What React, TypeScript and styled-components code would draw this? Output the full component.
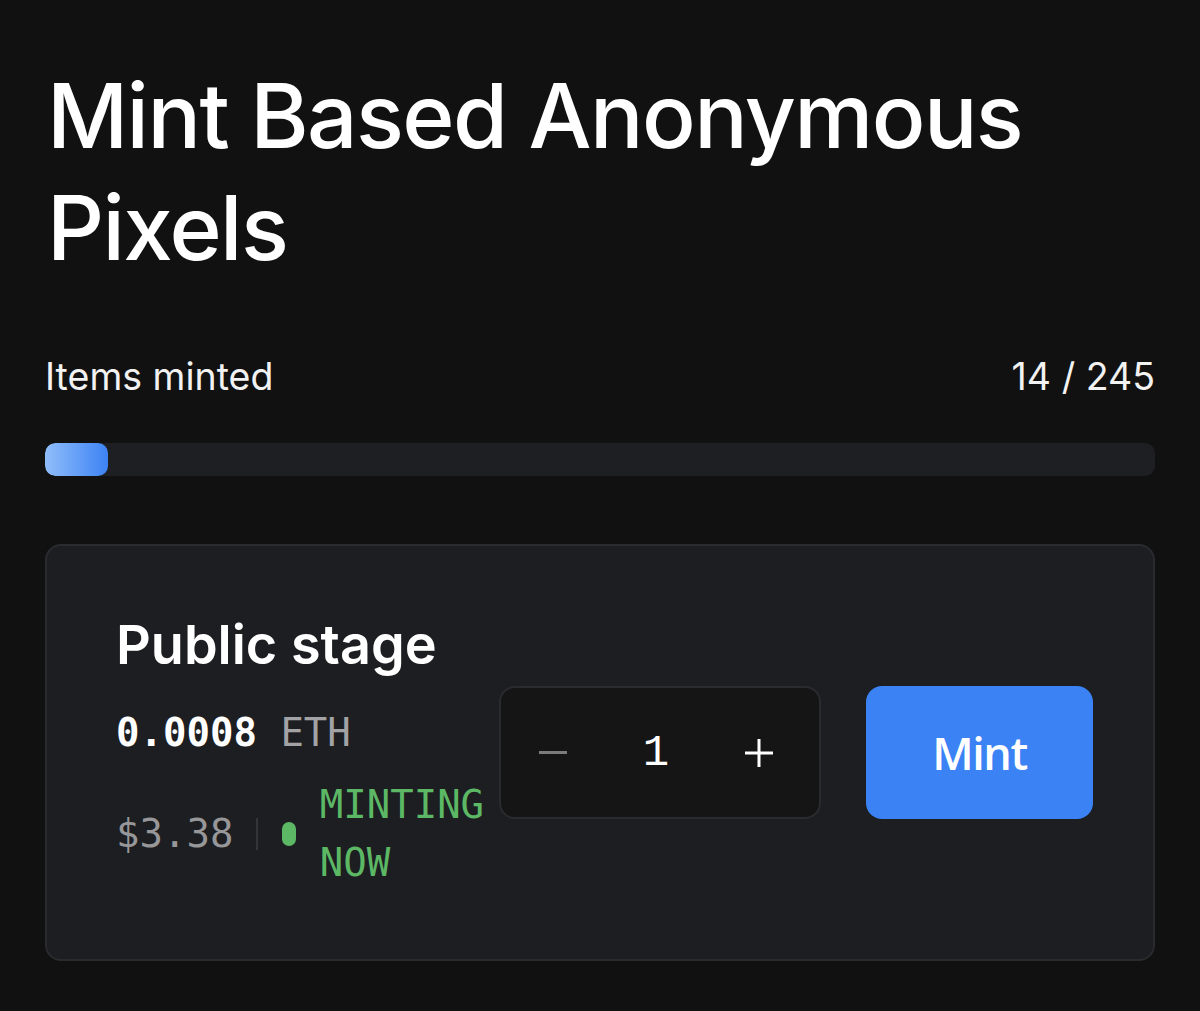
import React from "react";
import styled, { createGlobalStyle } from "styled-components";

const Global = createGlobalStyle`
  html, body { margin: 0; padding: 0; background: #111112; }
  body { font-family: Inter, "Noto Sans", sans-serif; color: #fff; }
`;

const Page = styled.main`
  width: 1200px;
  height: 1011px;
  box-sizing: border-box;
  padding: 60px 45px 0 45px;
  background: #111112;
  display: flex;
  flex-direction: column;
`;

const Title = styled.h1`
  margin: 0 0 0 2px;
  font-family: Inter, sans-serif;
  font-weight: 500;
  font-size: 89px;
  line-height: 112px;
  letter-spacing: -1.6px;
  color: #ffffff;
  max-width: 1010px;
`;

const CountRow = styled.div`
  margin-top: 69px;
  display: flex;
  justify-content: space-between;
  align-items: baseline;
  font-family: Inter, sans-serif;
  font-weight: 400;
  font-size: 37.5px;
  line-height: 48px;
  color: #f2f2f2;
`;

const Track = styled.div`
  margin-top: 42px;
  height: 33px;
  border-radius: 10px;
  background: #1e1f22;
  overflow: hidden;
`;

const Fill = styled.div`
  height: 100%;
  border-radius: 10px;
  background: linear-gradient(90deg, #90bdfa 0%, #3d83f4 100%);
`;

const Card = styled.section`
  margin-top: 68px;
  height: 417px;
  box-sizing: border-box;
  border: 2px solid #2a2b2f;
  border-radius: 16px;
  background: #1d1e21;
  padding: 0 60px 0 69px;
  display: flex;
  align-items: center;
`;

const Info = styled.div`
  width: 375px;
  flex: none;
  display: flex;
  flex-direction: column;
`;

const StageName = styled.h2`
  margin: 0;
  font-family: Inter, sans-serif;
  font-weight: 600;
  font-size: 54px;
  line-height: 64px;
  color: #fff;
`;

const Price = styled.div`
  margin-top: 30px;
  font-family: "DejaVu Sans Mono", monospace;
  font-size: 39px;
  line-height: 52px;
  color: #fff;
  font-weight: 600;
`;

const Unit = styled.span`
  color: #a3a3a6;
  font-weight: 400;
`;

const StatusRow = styled.div`
  margin-top: 17px;
  display: flex;
  align-items: center;
  font-family: "DejaVu Sans Mono", monospace;
  font-size: 39px;
`;

const Usd = styled.span`
  color: #97979a;
  line-height: 52px;
`;

const Divider = styled.span`
  width: 2px;
  height: 32px;
  background: #333437;
  margin: 0 24px 0 23px;
`;

const Dot = styled.span`
  width: 14px;
  height: 24px;
  border-radius: 7px;
  background: #5cb865;
  flex: none;
`;

const Status = styled.span`
  margin-left: 24px;
  color: #5cb865;
  line-height: 58px;
`;

const Stepper = styled.div`
  margin-left: 8px;
  width: 322px;
  height: 133px;
  flex: none;
  box-sizing: border-box;
  border: 2px solid #2a2b2e;
  border-radius: 16px;
  background: #151516;
  display: grid;
  grid-template-columns: 1fr 1fr 1fr;
  align-items: center;
  justify-items: center;
  padding: 0 8px 0 0;
  color: #fff;
`;

const StepButton = styled.button<{ $muted?: boolean }>`
  all: unset;
  display: flex;
  align-items: center;
  justify-content: center;
  color: ${(p) => (p.$muted ? "#7b7b7e" : "#ffffff")};
  cursor: pointer;
`;

const Qty = styled.span`
  font-family: "Liberation Mono", monospace;
  font-size: 44px;
`;

const MintButton = styled.button`
  all: unset;
  margin-left: 45px;
  width: 227px;
  height: 133px;
  flex: none;
  border-radius: 16px;
  background: #3b83f5;
  color: #fff;
  display: flex;
  align-items: center;
  justify-content: center;
  font-family: "Open Sans", sans-serif;
  font-weight: 600;
  font-size: 45px;
  letter-spacing: -1.5px;
  cursor: pointer;
`;

const Minus = () => (
  <svg width="28" height="4" viewBox="0 0 28 4">
    <rect x="0" y="0" width="28" height="3" fill="currentColor" />
  </svg>
);

const Plus = () => (
  <svg width="28" height="28" viewBox="0 0 28 28">
    <rect x="0" y="12.5" width="28" height="3" fill="currentColor" />
    <rect x="12.5" y="0" width="3" height="28" fill="currentColor" />
  </svg>
);

export default function App() {
  const minted = 14;
  const total = 245;
  return (
    <>
      <Global />
      <Page>
        <Title>Mint Based Anonymous Pixels</Title>
        <CountRow>
          <span>Items minted</span>
          <span>
            {minted} / {total}
          </span>
        </CountRow>
        <Track>
          <Fill style={{ width: `${(minted / total) * 100}%` }} />
        </Track>
        <Card>
          <Info>
            <StageName>Public stage</StageName>
            <Price>
              0.0008 <Unit>ETH</Unit>
            </Price>
            <StatusRow>
              <Usd>$3.38</Usd>
              <Divider />
              <Dot />
              <Status>MINTING NOW</Status>
            </StatusRow>
          </Info>
          <Stepper>
            <StepButton $muted>
              <Minus />
            </StepButton>
            <Qty>1</Qty>
            <StepButton>
              <Plus />
            </StepButton>
          </Stepper>
          <MintButton>Mint</MintButton>
        </Card>
      </Page>
    </>
  );
}
